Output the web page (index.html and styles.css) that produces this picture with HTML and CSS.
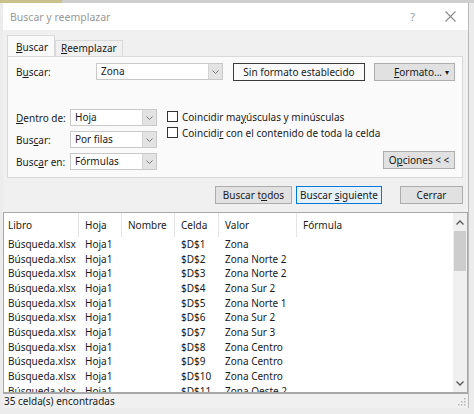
FILE: index.html
```html
<!DOCTYPE html>
<html lang="es">
<head>
    <meta charset="UTF-8">
    <title>Buscar y reemplazar</title>
    <link rel="stylesheet" href="styles.css">
</head>
<body>
    <div class="sheet-top"></div>
    <div class="dialog">
        <div class="titlebar">
            <span class="title">Buscar y reemplazar</span>
            <span class="help">?</span>
            <svg class="close" width="11" height="11" viewBox="0 0 11 11">
                <path d="M0.5 0.5 L10.5 10.5 M10.5 0.5 L0.5 10.5" stroke="#8a8a8a" stroke-width="1.1" fill="none"/>
            </svg>
        </div>

        <div class="main">
            <div class="tabs">
                <div class="tab active"><u>B</u>uscar</div>
                <div class="tab"><u>R</u>eemplazar</div>
            </div>

            <div class="panel">
                <div class="find-row">
                    <div class="find-label">B<u>u</u>scar:</div>
                    <div class="combo combo-find">
                        <span class="combo-text">Zona</span>
                        <span class="combo-arrow"><svg width="7" height="4" viewBox="0 0 7 4"><path d="M0.5 0.5 L3.5 3.5 L6.5 0.5" stroke="#777" fill="none"/></svg></span>
                    </div>
                    <div class="btn btn-preview">Sin formato establecido</div>
                    <div class="btn btn-format"><span><u>F</u>ormato...</span><span class="caret">▾</span></div>
                </div>

                <div class="options">
                    <div class="selects">
                        <div class="select-row">
                            <div class="select-label"><u>D</u>entro de:</div>
                            <div class="combo">
                                <span class="combo-text">Hoja</span>
                                <span class="combo-arrow"><svg width="7" height="4" viewBox="0 0 7 4"><path d="M0.5 0.5 L3.5 3.5 L6.5 0.5" stroke="#777" fill="none"/></svg></span>
                            </div>
                        </div>
                        <div class="select-row">
                            <div class="select-label">Bus<u>c</u>ar:</div>
                            <div class="combo">
                                <span class="combo-text">Por filas</span>
                                <span class="combo-arrow"><svg width="7" height="4" viewBox="0 0 7 4"><path d="M0.5 0.5 L3.5 3.5 L6.5 0.5" stroke="#777" fill="none"/></svg></span>
                            </div>
                        </div>
                        <div class="select-row">
                            <div class="select-label">Busc<u>a</u>r en:</div>
                            <div class="combo">
                                <span class="combo-text">Fórmulas</span>
                                <span class="combo-arrow"><svg width="7" height="4" viewBox="0 0 7 4"><path d="M0.5 0.5 L3.5 3.5 L6.5 0.5" stroke="#777" fill="none"/></svg></span>
                            </div>
                        </div>
                    </div>

                    <div class="checks">
                        <div class="check"><span class="box"></span><span>Coincidir ma<u>y</u>úsculas y minúsculas</span></div>
                        <div class="check"><span class="box"></span><span>Coincidi<u>r</u> con el contenido de toda la celda</span></div>
                    </div>

                    <div class="btn btn-options">O<u>p</u>ciones &lt; &lt;</div>
                </div>
            </div>

            <div class="actions">
                <div class="btn btn-all">Buscar t<u>o</u>dos</div>
                <div class="btn btn-next">Buscar <u>s</u>iguiente</div>
                <div class="btn btn-close">Cerrar</div>
            </div>
        </div>

        <div class="results">
            <div class="list">
                <div class="row head">
                    <div class="cell">Libro</div>
                    <div class="cell">Hoja</div>
                    <div class="cell">Nombre</div>
                    <div class="cell">Celda</div>
                    <div class="cell">Valor</div>
                    <div class="cell">Fórmula</div>
                </div>
                <div class="row"><div class="cell">Búsqueda.xlsx</div><div class="cell">Hoja1</div><div class="cell"></div><div class="cell">$D$1</div><div class="cell">Zona</div><div class="cell"></div></div>
                <div class="row"><div class="cell">Búsqueda.xlsx</div><div class="cell">Hoja1</div><div class="cell"></div><div class="cell">$D$2</div><div class="cell">Zona Norte 2</div><div class="cell"></div></div>
                <div class="row"><div class="cell">Búsqueda.xlsx</div><div class="cell">Hoja1</div><div class="cell"></div><div class="cell">$D$3</div><div class="cell">Zona Norte 2</div><div class="cell"></div></div>
                <div class="row"><div class="cell">Búsqueda.xlsx</div><div class="cell">Hoja1</div><div class="cell"></div><div class="cell">$D$4</div><div class="cell">Zona Sur 2</div><div class="cell"></div></div>
                <div class="row"><div class="cell">Búsqueda.xlsx</div><div class="cell">Hoja1</div><div class="cell"></div><div class="cell">$D$5</div><div class="cell">Zona Norte 1</div><div class="cell"></div></div>
                <div class="row"><div class="cell">Búsqueda.xlsx</div><div class="cell">Hoja1</div><div class="cell"></div><div class="cell">$D$6</div><div class="cell">Zona Sur 2</div><div class="cell"></div></div>
                <div class="row"><div class="cell">Búsqueda.xlsx</div><div class="cell">Hoja1</div><div class="cell"></div><div class="cell">$D$7</div><div class="cell">Zona Sur 3</div><div class="cell"></div></div>
                <div class="row"><div class="cell">Búsqueda.xlsx</div><div class="cell">Hoja1</div><div class="cell"></div><div class="cell">$D$8</div><div class="cell">Zona Centro</div><div class="cell"></div></div>
                <div class="row"><div class="cell">Búsqueda.xlsx</div><div class="cell">Hoja1</div><div class="cell"></div><div class="cell">$D$9</div><div class="cell">Zona Centro</div><div class="cell"></div></div>
                <div class="row"><div class="cell">Búsqueda.xlsx</div><div class="cell">Hoja1</div><div class="cell"></div><div class="cell">$D$10</div><div class="cell">Zona Centro</div><div class="cell"></div></div>
                <div class="row"><div class="cell">Búsqueda.xlsx</div><div class="cell">Hoja1</div><div class="cell"></div><div class="cell">$D$11</div><div class="cell">Zona Oeste 2</div><div class="cell"></div></div>
            </div>
            <div class="scrollbar">
                <div class="scroll-btn"><svg width="8" height="5" viewBox="0 0 8 5"><path d="M0.5 4.5 L4 1 L7.5 4.5" stroke="#555" stroke-width="1.3" fill="none"/></svg></div>
                <div class="thumb"></div>
                <div class="track"></div>
                <div class="scroll-btn"><svg width="8" height="5" viewBox="0 0 8 5"><path d="M0.5 0.5 L4 4 L7.5 0.5" stroke="#555" stroke-width="1.3" fill="none"/></svg></div>
            </div>
        </div>

        <div class="status">
            <span>35 celda(s) encontradas</span>
            <svg class="grip" width="8" height="8" viewBox="0 0 8 8">
                <rect x="6" y="0" width="1.5" height="1.5" fill="#b5b5b5"/>
                <rect x="3" y="3" width="1.5" height="1.5" fill="#b5b5b5"/>
                <rect x="6" y="3" width="1.5" height="1.5" fill="#b5b5b5"/>
                <rect x="0" y="6" width="1.5" height="1.5" fill="#b5b5b5"/>
                <rect x="3" y="6" width="1.5" height="1.5" fill="#b5b5b5"/>
                <rect x="6" y="6" width="1.5" height="1.5" fill="#b5b5b5"/>
            </svg>
        </div>
    </div>
</body>
</html>
```

FILE: styles.css
```css
body {
    margin: 0;
    width: 474px;
    height: 414px;
    overflow: hidden;
    background-color: #ececec;
    font-family: "Noto Sans", "Open Sans", sans-serif;
    font-size: 10px;
    color: #1a1a1a;
    padding: 3px 0 0 3px;
    box-sizing: border-box;
    position: relative;
    white-space: nowrap;
}
.sheet-top {
    position: absolute;
    left: 0;
    top: 0;
    width: 474px;
    height: 3px;
    background: linear-gradient(to right, #c9c08a 0 62px, #cfcfcf 62px);
}
u {
    text-decoration-thickness: 1px;
    text-underline-offset: 1px;
}
.dialog {
    width: 466px;
    height: 405px;
    background-color: #f0f0f0;
    border-right: 1px solid #b9b9b9;
    box-sizing: border-box;
    display: flex;
    flex-direction: column;
}
.titlebar {
    height: 27px;
    background-color: #ffffff;
    display: flex;
    align-items: center;
    padding: 0 12px 0 7px;
}
.title {
    color: #999999;
    font-size: 10.5px;
    flex: 1;
}
.help {
    color: #999999;
    font-size: 11px;
    margin-right: 30px;
}
.main {
    padding: 6px 5px 0 4px;
}
.tabs {
    display: flex;
    align-items: flex-end;
    height: 20px;
    position: relative;
    z-index: 1;
}
.tab {
    height: 16px;
    line-height: 15px;
    padding: 0 5px 0 5px;
    border: 1px solid #d9d9d9;
    border-bottom: none;
    box-sizing: border-box;
    background-color: #f0f0f0;
}
.tab.active {
    height: 21px;
    line-height: 22px;
    width: 48px;
    padding-left: 8px;
    background-color: #fafafa;
    border-color: #d9d9d9;
}
.panel {
    height: 122px;
    background-color: #fafafa;
    border: 1px solid #d9d9d9;
    box-sizing: border-box;
    padding: 6px 7px 0 7px;
}
.find-row {
    display: flex;
    align-items: center;
    height: 17px;
}
.find-label {
    width: 81px;
    padding-left: 1px;
    box-sizing: border-box;
}
.combo {
    height: 17px;
    border: 1px solid #c9c9c9;
    background-color: #ffffff;
    box-sizing: border-box;
    display: flex;
    align-items: stretch;
    width: 87px;
}
.combo-find {
    width: 127px;
}
.combo-text {
    flex: 1;
    padding-left: 4px;
    line-height: 15px;
}
.combo-arrow {
    width: 13px;
    background-color: #e3e3e3;
    border-left: 1px solid #d4d4d4;
    display: flex;
    align-items: center;
    justify-content: center;
}
.btn {
    height: 18px;
    line-height: 16px;
    border: 1px solid #adadad;
    background-color: #e1e1e1;
    box-sizing: border-box;
    text-align: center;
}
.btn-preview {
    width: 132px;
    margin-left: 10px;
    background-color: #fafafa;
    border-color: #3c3c3c;
}
.btn-format {
    width: 81px;
    margin-left: 9px;
    display: flex;
    justify-content: space-between;
    padding: 0 5px 0 19px;
}
.caret {
    font-size: 8px;
}
.options {
    display: flex;
    align-items: flex-start;
    margin-top: 29px;
}
.selects {
    display: flex;
    flex-direction: column;
    gap: 5px;
}
.select-row {
    display: flex;
    align-items: center;
}
.select-label {
    width: 55px;
    padding-left: 1px;
    box-sizing: border-box;
}
.checks {
    margin-left: 10px;
    margin-top: 1px;
    display: flex;
    flex-direction: column;
    gap: 3px;
}
.check {
    display: flex;
    align-items: center;
    height: 13px;
}
.box {
    width: 11px;
    height: 11px;
    border: 1px solid #333333;
    background-color: #ffffff;
    box-sizing: border-box;
    margin-right: 4px;
}
.btn-options {
    margin-left: auto;
    margin-top: 42px;
    width: 72px;
}
.actions {
    display: flex;
    margin-top: 8px;
    height: 18px;
}
.btn-all {
    margin-left: 208px;
    width: 77px;
}
.btn-next {
    margin-left: 4px;
    width: 86px;
    border-color: #0078d7;
    background-color: #e5f1fb;
}
.btn-close {
    margin-left: 18px;
    width: 63px;
}
.results {
    margin-top: 8px;
    height: 181px;
    border: 1px solid #a8a8a8;
    background-color: #ffffff;
    display: flex;
    box-sizing: border-box;
}
.list {
    flex: 1;
    overflow: hidden;
}
.row {
    display: grid;
    grid-template-columns: 75px 43px 53px 44px 78px 1fr;
    height: 14.67px;
    line-height: 14.67px;
}
.row.head {
    height: 24px;
    line-height: 25px;
}
.cell {
    padding-left: 6px;
    overflow: hidden;
}
.cell:first-child {
    padding-left: 4px;
}
.head .cell {
    border-right: 1px solid #e5e5e5;
}
.head .cell:last-child {
    border-right: none;
}
.scrollbar {
    width: 14px;
    background-color: #f0f0f0;
    display: flex;
    flex-direction: column;
}
.scroll-btn {
    height: 18px;
    display: flex;
    align-items: center;
    justify-content: center;
}
.thumb {
    height: 40px;
    background-color: #cdcdcd;
    margin: 0 1px;
}
.track {
    flex: 1;
}
.status {
    flex: 1;
    border-top: 1px solid #a8a8a8;
    display: flex;
    align-items: center;
    justify-content: space-between;
    padding: 0 2px 0 1px;
}
.grip {
    align-self: flex-end;
    margin-bottom: 2px;
}
```
